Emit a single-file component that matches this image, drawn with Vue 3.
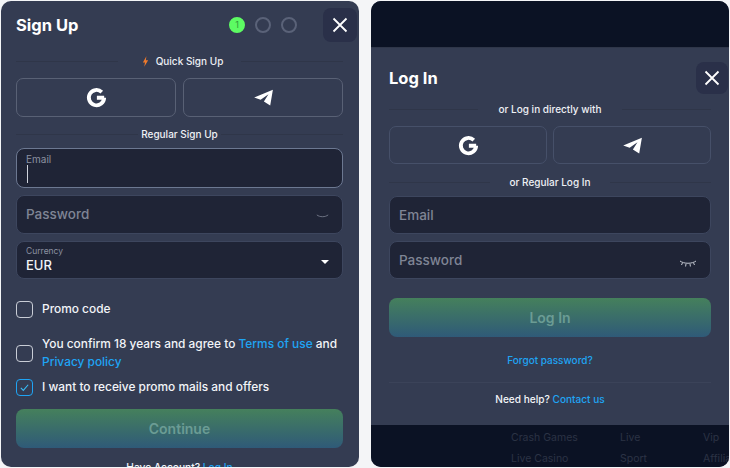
<template>
  <div class="page">
    <section class="panel signup">
      <button class="close" aria-label="Close">
        <svg viewBox="0 0 16 16" width="16" height="16"><path d="M1.500 1.500l13 13M14.500 1.500l-13 13" /></svg>
      </button>
      <header class="head">
        <h1>Sign Up</h1>
        <div class="steps">
          <span class="step active">1</span>
          <span class="step"></span>
          <span class="step"></span>
        </div>
      </header>

      <div class="sep quick">
        <span class="sep-text">
          <svg class="bolt" viewBox="0 0 8 12" width="7" height="11"><path d="M5 0L1 7h2.400L2.600 12 7 4.600H4.400z" /></svg>
          Quick Sign Up
        </span>
      </div>
      <div class="socials">
        <button v-for="s in socials" :key="s" class="social">
          <svg v-if="s === 'google'" viewBox="0 0 24 24" width="23" height="23"><path class="g" d="M20 12.300h-7.600M20 12.300a8 8 0 1 1-2.500-6" /></svg>
          <svg v-else viewBox="0 0 24 24" width="23" height="23"><path class="plane" d="M2.300 12L21.800 3.800 19 20.400 12.400 16.200 17.200 8.600 9 14.400z" /></svg>
        </button>
      </div>
      <div class="sep regular"><span class="sep-text">Regular Sign Up</span></div>

      <div class="fields">
        <div class="field focus">
          <label>Email</label>
          <span class="caret"></span>
        </div>
        <div class="field">
          <span class="placeholder">Password</span>
          <svg class="eye dim" viewBox="0 0 16 6" width="13" height="5"><path d="M1 1c3.500 3 10.500 3 14 0" /></svg>
        </div>
        <div class="field select">
          <label>Currency</label>
          <span class="value">EUR</span>
          <span class="arrow"></span>
        </div>
      </div>

      <div class="check promo">
        <span class="box"></span>
        <span>Promo code</span>
      </div>
      <div class="check terms">
        <span class="box"></span>
        <span>You confirm 18 years and agree to <a>Terms of use</a> and<br /><a>Privacy policy</a></span>
      </div>
      <div class="check mails">
        <span class="box on">
          <svg viewBox="0 0 12 12" width="11" height="11"><path d="M2 6.500l2.700 2.700L10 3" /></svg>
        </span>
        <span>I want to receive promo mails and offers</span>
      </div>

      <button class="submit">Continue</button>
      <p class="account">Have Account? <a>Log In</a></p>
    </section>

    <section class="panel login">
      <div class="strip top"></div>
      <div class="login-body">
        <button class="close" aria-label="Close">
          <svg viewBox="0 0 16 16" width="16" height="16"><path d="M1.500 1.500l13 13M14.500 1.500l-13 13" /></svg>
        </button>
        <h1>Log In</h1>
        <div class="sep direct"><span class="sep-text">or Log in directly with</span></div>
        <div class="socials">
          <button v-for="s in socials" :key="s" class="social">
            <svg v-if="s === 'google'" viewBox="0 0 24 24" width="23" height="23"><path class="g" d="M20 12.300h-7.600M20 12.300a8 8 0 1 1-2.500-6" /></svg>
            <svg v-else viewBox="0 0 24 24" width="23" height="23"><path class="plane" d="M2.300 12L21.800 3.800 19 20.400 12.400 16.200 17.200 8.600 9 14.400z" /></svg>
          </button>
        </div>
        <div class="sep reg-login"><span class="sep-text">or Regular Log In</span></div>
        <div class="fields">
          <div class="field"><span class="placeholder">Email</span></div>
          <div class="field">
            <span class="placeholder">Password</span>
            <svg class="eye" viewBox="0 0 18 8" width="18" height="8"><path d="M1 1c4 3 12 3 16 0M3.500 2.800L2.500 5M7 3.800L6.600 6.500M11 3.800L11.400 6.500M14.500 2.800L15.500 5" /></svg>
          </div>
        </div>
        <button class="submit">Log In</button>
        <a class="forgot">Forgot password?</a>
        <p class="help">Need help? <a>Contact us</a></p>
      </div>
      <div class="strip bottom">
        <div class="links">
          <span v-for="l in footerLinks" :key="l">{{ l }}</span>
        </div>
      </div>
    </section>
  </div>
</template>

<script setup>
const socials = ['google', 'telegram']
const footerLinks = ['Crash Games', 'Live', 'Vip', 'Live Casino', 'Sport', 'Affiliate']
</script>

<style>
html, body {
  margin: 0;
  background: #f4f5f7;
  overflow: hidden;
}
</style>

<style scoped>
.page {
  width: 730px;
  height: 468px;
  box-sizing: border-box;
  padding: 1px;
  display: flex;
  gap: 12px;
  font-family: Inter, "Open Sans", sans-serif;
  color: #f2f4f8;
}

.panel {
  position: relative;
  flex: 0 0 358px;
  height: 466px;
  border-radius: 10px;
  overflow: hidden;
  background: #343c52;
}

.signup {
  padding: 0 16px 0 15px;
  box-sizing: border-box;
}

h1 {
  margin: 0;
  font-size: 16.500px;
  font-weight: 700;
  color: #fff;
  line-height: 24px;
}

.head {
  display: flex;
  align-items: center;
  justify-content: space-between;
  padding: 12px 46px 0 0;
}

.steps {
  display: flex;
  gap: 10px;
}

.step {
  width: 16px;
  height: 16px;
  box-sizing: border-box;
  border: 2px solid #5a6278;
  border-radius: 50%;
  font-size: 9px;
  line-height: 12px;
  text-align: center;
}

.step.active {
  background: #5dfb63;
  border-color: #5dfb63;
  color: #2f9a3a;
}

.close {
  position: absolute;
  right: 2px;
  top: 7px;
  width: 34px;
  height: 34px;
  padding: 0;
  border: none;
  border-radius: 8px;
  background: #2a3049;
  display: flex;
  align-items: center;
  justify-content: center;
}

.close path {
  fill: none;
  stroke: #fff;
  stroke-width: 1.800;
}

.sep {
  display: flex;
  align-items: center;
  justify-content: center;
  height: 16px;
  font-size: 10px;
  font-weight: 500;
  color: #eef0f5;
  background: linear-gradient(#2f3649, #2f3649) center / 100% 1px no-repeat;
}

.sep-text {
  padding: 0 20px;
  background: #343c52;
  display: flex;
  align-items: center;
  gap: 7px;
}

.quick .sep-text { padding: 0 18px 0 24px; }
.regular .sep-text { padding: 0 3px; }
.reg-login .sep-text { padding: 0 19px; }

.quick { margin-top: 16px; }
.regular { margin-top: 9px; }

.bolt path { fill: #ef7a2c; }

.socials {
  display: flex;
  gap: 7px;
  margin-top: 9px;
}

.social {
  flex: 1;
  height: 39px;
  padding: 0;
  border: 1px solid #596175;
  border-radius: 7px;
  background: transparent;
  display: flex;
  align-items: center;
  justify-content: center;
}

.g {
  fill: none;
  stroke: #fff;
  stroke-width: 4;
}

.plane { fill: #fff; }

.fields {
  display: flex;
  flex-direction: column;
  gap: 7px;
  margin-top: 6px;
}

.field {
  position: relative;
  height: 38.500px;
  box-sizing: border-box;
  padding: 0 9px;
  border: 1px solid #3d465e;
  border-radius: 8px;
  background: #1f2436;
  display: flex;
  flex-direction: column;
  justify-content: center;
}

.field.focus {
  height: 40px;
  border-color: #6c7891;
  justify-content: flex-start;
  padding-top: 5px;
}

.field label {
  font-size: 8.500px;
  line-height: 11px;
  color: #8b91a1;
}

.field.focus label { font-size: 10px; }

.caret {
  width: 1px;
  height: 18px;
  margin-left: 1px;
  background: #cfd3dc;
}

.placeholder {
  font-size: 13.500px;
  font-weight: 500;
  color: #7f8595;
}

.value {
  font-size: 13px;
  font-weight: 500;
  line-height: 16px;
  color: #f2f4f8;
}

.arrow {
  position: absolute;
  right: 13px;
  top: 18px;
  border: 4px solid transparent;
  border-bottom: none;
  border-top-color: #fff;
}

.eye {
  position: absolute;
  right: 13px;
  top: 18px;
}

.eye path {
  fill: none;
  stroke: #c4c8d2;
  stroke-width: 1;
}

.eye.dim path { stroke: #7e8494; }

.check {
  display: flex;
  align-items: center;
  gap: 9px;
  font-size: 11.900px;
  font-weight: 500;
  line-height: 18px;
  color: #f2f4f8;
}

.check a, .account a, .help a, .forgot {
  color: #1fa4f4;
}

.promo { margin-top: 21px; }
.terms { margin-top: 17px; }
.mails { margin-top: 7px; }

.box {
  flex: none;
  width: 17px;
  height: 17px;
  box-sizing: border-box;
  border: 1.500px solid #c9cdd6;
  border-radius: 4px;
  display: flex;
  align-items: center;
  justify-content: center;
}

.box.on { border-color: #1fa4f4; }

.box path {
  fill: none;
  stroke: #38bdf8;
  stroke-width: 1.200;
}

.submit {
  display: block;
  width: 100%;
  height: 39px;
  padding: 0;
  border: none;
  border-radius: 8px;
  background: linear-gradient(#45805c, #2f5a78);
  font: 600 14px Inter, sans-serif;
  color: #6b9c94;
}

.signup .submit { margin-top: 13px; }

.account {
  margin: 13px 0 0;
  text-align: center;
  font-size: 10.200px;
  font-weight: 500;
}

.login {
  display: flex;
  flex-direction: column;
}

.strip {
  flex: none;
  background: #0b1224;
}

.top { height: 46px; }
.bottom {
  height: 42px;
  box-sizing: border-box;
  padding: 6px 0 0 140px;
  overflow: hidden;
}

.links {
  display: grid;
  grid-template-columns: 109px 83px 60px;
  row-gap: 8px;
  font-size: 10.500px;
  line-height: 13px;
  color: #2b3345;
  white-space: nowrap;
}

.login-body {
  position: relative;
  flex: 1;
  padding: 18px 18px 0;
  border-top: 1px solid #2f3649;
}

.login-body .close {
  top: 14px;
  right: 1px;
  width: 32px;
  height: 32px;
}

.direct { margin-top: 11px; }
.login .socials { gap: 6px; }
.login .social { height: 38px; border-color: #465069; }
.reg-login { margin-top: 10px; }
.login .field { height: 38px; }
.login .submit { margin-top: 19px; }

.forgot {
  display: block;
  margin-top: 16px;
  padding-bottom: 15px;
  border-bottom: 1px solid #3b4359;
  text-align: center;
  font-size: 10px;
  font-weight: 500;
  line-height: 14px;
}

.help {
  margin: 9px 0 0;
  text-align: center;
  font-size: 10.100px;
  font-weight: 500;
  line-height: 14px;
}
</style>
